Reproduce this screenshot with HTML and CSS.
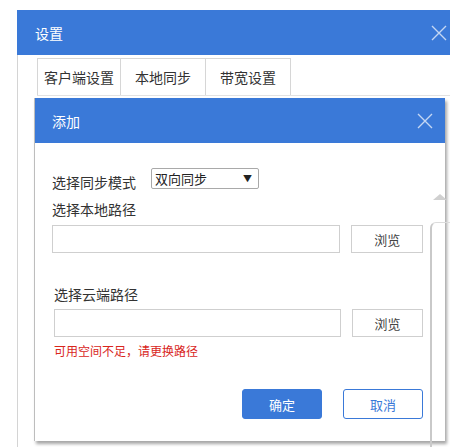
FILE: index.html
```html
<!DOCTYPE html>
<html lang="zh-CN">
<head>
    <meta charset="UTF-8">
    <meta name="viewport" content="width=device-width, initial-scale=1.0">
    <title>设置</title>
    <link rel="stylesheet" href="styles.css">
</head>
<body>
    <div class="dialog settings">
        <div class="dialog-header">
            <span class="dialog-title">设置</span>
            <svg class="close" width="16" height="16" viewBox="0 0 16 16"><path d="M1 1L15 15M15 1L1 15" stroke="currentColor" stroke-width="1.4" fill="none"/></svg>
        </div>
        <div class="settings-body">
            <div class="tabs">
                <div class="tab">客户端设置</div>
                <div class="tab active">本地同步</div>
                <div class="tab">带宽设置</div>
            </div>
        </div>
    </div>

    <div class="dialog add-dialog">
        <div class="dialog-header">
            <span class="dialog-title">添加</span>
            <svg class="close" width="16" height="16" viewBox="0 0 16 16"><path d="M1 1L15 15M15 1L1 15" stroke="currentColor" stroke-width="1.4" fill="none"/></svg>
        </div>
        <form class="add-form">
            <div class="mode-row">
                <label class="mode-label">选择同步模式</label>
                <div class="select">
                    <span>双向同步</span>
                    <span class="caret">▼</span>
                </div>
            </div>

            <div class="field-label first">选择本地路径</div>
            <div class="path-row">
                <input type="text" class="path-input">
                <button type="button" class="browse">浏览</button>
            </div>

            <div class="cloud">
                <div class="field-label second">选择云端路径</div>
                <div class="path-row">
                    <input type="text" class="path-input">
                    <button type="button" class="browse">浏览</button>
                </div>
                <div class="error">可用空间不足，请更换路径</div>
            </div>

            <div class="actions">
                <button type="button" class="btn primary">确定</button>
                <button type="button" class="btn">取消</button>
            </div>
        </form>
    </div>

    <!-- scrollbar of the page behind the dialogs -->
    <div class="back-scroll"></div>
    <div class="back-arrow"></div>
</body>
</html>
```

FILE: styles.css
```css
body {
    margin: 0;
    background: #fff;
    font-family: "Noto Sans CJK SC", "Liberation Sans", sans-serif;
    color: #333;
    position: relative;
    width: 450px;
    height: 447px;
    overflow: hidden;
}
.dialog-header {
    background-color: #3a79d8;
    height: 45px;
    display: flex;
    align-items: center;
    justify-content: space-between;
    color: #fff;
    font-size: 14px;
}
.close {
    color: rgba(255,255,255,0.7);
}
.settings {
    margin: 10px 0 0 17px;
    width: 433px;
    height: 437px;
}
.settings .dialog-header {
    padding: 0 3px 0 18px;
}
.settings-body {
    border-left: 1px solid #d4d4d4;
    height: 392px;
    padding: 3px 0 0 19px;
}
.tabs {
    display: flex;
    border-bottom: 1px solid #e2e2e2;
}
.tab {
    width: 84px;
    height: 37px;
    box-sizing: border-box;
    border: 1px solid #d6d6d6;
    border-bottom: none;
    margin-right: -1px;
    display: flex;
    align-items: center;
    justify-content: center;
    font-size: 14px;
    color: #333;
    background: #fff;
}
.tab + .tab {
    width: 86px;
}
.add-dialog {
    position: absolute;
    left: 34px;
    top: 98px;
    width: 411px;
    background: #fff;
    border-left: 1px solid #bdbdbd;
    box-shadow: 2px 3px 3px rgba(0,0,0,0.35);
    box-sizing: border-box;
}
.add-dialog .dialog-header {
    padding: 0 12px 0 17px;
}
.add-form {
    padding: 25px 22px 22px 17px;
    font-size: 14px;
}
.mode-row {
    display: flex;
    align-items: center;
    height: 21px;
}
.mode-label {
    padding-top: 6px;
    margin-right: 15px;
}
.select {
    width: 108px;
    height: 21px;
    box-sizing: border-box;
    border: 1px solid #a9a9a9;
    border-radius: 2px;
    display: flex;
    align-items: center;
    justify-content: space-between;
    padding: 0 6px 0 3px;
    font-size: 13px;
    color: #222;
}
.caret {
    font-size: 9px;
}
.field-label {
    line-height: 20px;
}
.field-label.first {
    margin-top: 10px;
}
.path-row {
    display: flex;
    margin-top: 6px;
}
.path-input {
    width: 290px;
    height: 28px;
    box-sizing: border-box;
    border: 1px solid #cfcfcf;
    margin: 0;
    padding: 0 6px;
}
.browse {
    margin-left: 11px;
    width: 72px;
    height: 28px;
    box-sizing: border-box;
    border: 1px solid #cfcfcf;
    background: #fff;
    font-family: inherit;
    font-size: 13px;
    color: #444;
    padding: 0;
}
.cloud {
    margin-left: 2px;
}
.field-label.second {
    margin-top: 31px;
}
.cloud .path-row {
    margin-top: 5px;
}
.error {
    margin-top: 6px;
    line-height: 16px;
    font-size: 12px;
    color: #d9261c;
}
.actions {
    display: flex;
    justify-content: flex-end;
    gap: 21px;
    margin-top: 30px;
}
.btn {
    width: 80px;
    height: 30px;
    box-sizing: border-box;
    border: 1px solid #3a79d8;
    border-radius: 3px;
    background: #fff;
    color: #3a79d8;
    font-family: inherit;
    font-size: 13px;
    padding: 0;
}
.btn.primary {
    background: #3a79d8;
    color: #fff;
}
.back-scroll {
    position: absolute;
    left: 430px;
    top: 222px;
    width: 20px;
    height: 230px;
    border-left: 2px solid #c9c9c9;
    border-top: 1px solid #dcdcdc;
    border-top-left-radius: 6px;
}
.back-arrow {
    position: absolute;
    left: 433px;
    top: 194px;
    width: 0;
    height: 0;
    border-left: 7px solid transparent;
    border-right: 7px solid transparent;
    border-bottom: 6px solid #d0d0d0;
}
```
